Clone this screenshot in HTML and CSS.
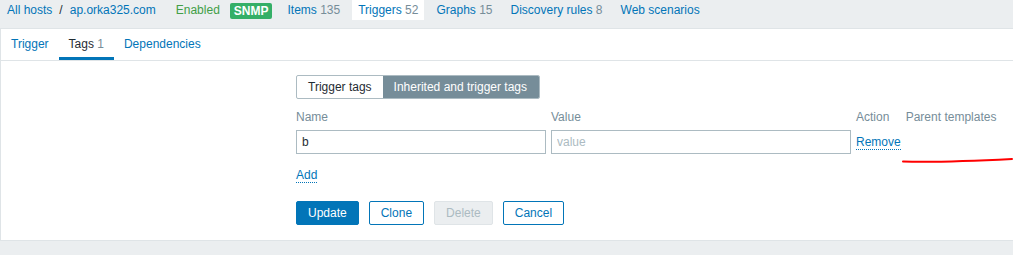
FILE: index.html
```html
<!DOCTYPE html>
<html>
<head>
<meta charset="utf-8">
<link rel="stylesheet" href="styles.css">
</head>
<body>
<nav class="host-nav">
  <a class="crumb" href="#">All hosts</a>
  <span class="crumb-sep">/</span>
  <a class="crumb host" href="#">ap.orka325.com</a>
  <span class="status">Enabled</span>
  <span class="badge">SNMP</span>
  <a class="nav-item" href="#">Items <span class="count">135</span></a>
  <a class="nav-item selected" href="#">Triggers <span class="count">52</span></a>
  <a class="nav-item" href="#">Graphs <span class="count">15</span></a>
  <a class="nav-item" href="#">Discovery rules <span class="count">8</span></a>
  <a class="nav-item" href="#">Web scenarios</a>
</nav>
<main class="panel">
  <ul class="tabs">
    <li class="tab"><a href="#">Trigger</a></li>
    <li class="tab active"><span>Tags <span class="count">1</span></span></li>
    <li class="tab"><a href="#">Dependencies</a></li>
  </ul>
  <form class="form">
    <div class="radio">
      <span class="seg">Trigger tags</span>
      <span class="seg on">Inherited and trigger tags</span>
    </div>
    <div class="tag-table">
      <div class="th">Name</div>
      <div class="th">Value</div>
      <div class="th">Action</div>
      <div class="th">Parent templates</div>
      <input class="inp name" type="text" value="b">
      <input class="inp value" type="text" placeholder="value">
      <div class="cell"><a class="dotted" href="#">Remove</a></div>
      <div class="cell"></div>
    </div>
    <div class="add-row"><a class="dotted" href="#">Add</a></div>
    <div class="buttons">
      <button class="btn primary" type="button">Update</button>
      <button class="btn alt" type="button">Clone</button>
      <button class="btn disabled" type="button" disabled>Delete</button>
      <button class="btn alt" type="button">Cancel</button>
    </div>
  </form>
  <svg class="scribble" width="113" height="14" viewBox="0 0 113 14">
    <path d="M3 7.6 C 35 8.4, 70 7.2, 112 5" fill="none" stroke="#ff0000" stroke-width="2" stroke-linecap="round"/>
  </svg>
</main>
</body>
</html>
```

FILE: styles.css
```css
* { box-sizing: border-box; }
html, body {
  margin: 0;
  padding: 0;
}
body {
  background: #ebeef0;
  font-family: "Liberation Sans", Arial, sans-serif;
  font-size: 12px;
  color: #1f2c33;
  width: 1013px;
  height: 255px;
  overflow: hidden;
}
a { color: #0275b8; text-decoration: none; }

.host-nav {
  display: flex;
  align-items: flex-start;
  height: 28px;
  padding-left: 7px;
  line-height: 20px;
  white-space: nowrap;
}
.crumb-sep {
  margin: 0 7px;
  color: #1f2c33;
}
.host { margin-right: 20px; }
.status { color: #429e47; margin-right: 10px; }
.badge {
  margin-top: 3px;
  height: 16px;
  line-height: 16px;
  padding: 0 4px;
  background: #34af67;
  color: #fff;
  font-weight: bold;
  font-size: 12px;
  border-radius: 2px;
  margin-right: 9px;
}
.nav-item {
  padding: 0 6px;
  margin-right: 6px;
  height: 20px;
}
.nav-item.selected { background: #fff; }
.count { color: #768d99; }

.panel {
  position: relative;
  background: #fff;
  border-top: 1px solid #dfe4e7;
  border-left: 1px solid #dfe4e7;
  border-bottom: 1px solid #dfe4e7;
  height: 213px;
}
.tabs {
  list-style: none;
  margin: 0;
  padding: 0;
  display: flex;
  height: 32px;
  border-bottom: 1px solid #dfe4e7;
}
.tab {
  padding: 0 10px;
  line-height: 31px;
  height: 31px;
}
.tab.active {
  border-bottom: 3px solid #0275b8;
}

.form {
  padding: 14px 0 0 295px;
}
.radio {
  display: inline-flex;
  height: 24px;
  border: 1px solid #acbbc2;
  border-radius: 2px;
  overflow: hidden;
}
.seg {
  line-height: 22px;
  padding: 0 11px;
  color: #1f2c33;
}
.seg.on {
  background: #768d99;
  color: #fff;
  padding: 0 12px 0 11px;
}
.tag-table {
  display: grid;
  grid-template-columns: 250px 300px max-content max-content;
  justify-content: start;
  column-gap: 5px;
  row-gap: 5px;
  margin-top: 10px;
  align-items: center;
}
.th {
  color: #768d99;
  line-height: 16px;
}
.inp {
  height: 24px;
  border: 1px solid #acbbc2;
  padding: 0 5px;
  font-family: "Liberation Sans", Arial, sans-serif;
  font-size: 12px;
  color: #1f2c33;
  background: #fff;
  border-radius: 0;
  outline: none;
  width: 100%;
}
.inp::placeholder { color: #acbbc2; }
.dotted { border-bottom: 1px dotted #0275b8; }
.add-row {
  margin-top: 13px;
  line-height: 16px;
}
.buttons {
  display: flex;
  gap: 10px;
  margin-top: 18px;
}
.btn {
  height: 24px;
  padding: 0 11px;
  font-family: "Liberation Sans", Arial, sans-serif;
  font-size: 12px;
  border-radius: 2px;
  border: 1px solid #0275b8;
  cursor: pointer;
}
.btn.primary { background: #0275b8; color: #fff; }
.btn.alt { background: #fff; color: #0275b8; }
.btn.disabled {
  background: #ebeef0;
  border-color: #dfe4e7;
  color: #acbbc2;
}
.scribble {
  position: absolute;
  left: 899px;
  top: 125px;
}
```
